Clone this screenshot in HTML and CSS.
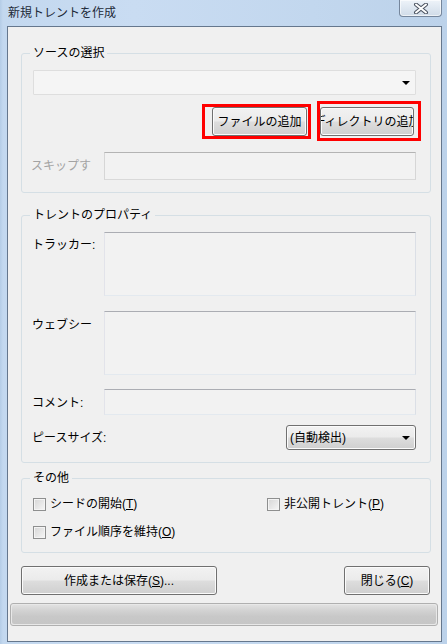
FILE: index.html
```html
<!DOCTYPE html>
<html lang="ja">
<head>
<meta charset="utf-8">
<title>新規トレントを作成</title>
<link rel="stylesheet" href="styles.css">
</head>
<body>
<div class="window">
  <div class="titlebar">
    <span class="title">新規トレントを作成</span>
    <div class="close">
      <svg width="16" height="11" viewBox="0 0 16 11">
        <path d="M3 1.5 L13 9.5 M13 1.5 L3 9.5" stroke="#4a5260" stroke-width="4" stroke-linecap="round" fill="none"/>
        <path d="M3 1.5 L13 9.5 M13 1.5 L3 9.5" stroke="#ffffff" stroke-width="2" stroke-linecap="round" fill="none"/>
      </svg>
    </div>
  </div>
  <div class="client">
    <section class="group g1">
      <div class="gtitle">ソースの選択</div>
      <div class="combo"><span class="arrow"></span></div>
      <div class="btnrow">
        <div class="hl hl1"><div class="btn b-src"><span>ファイルの追加</span></div></div>
        <div class="hl hl2"><div class="btn b-src b-dir"><span>ディレクトリの追加</span></div></div>
      </div>
      <div class="row r-skip">
        <span class="lbl lbl-dis">スキップす</span>
        <div class="field f-skip"></div>
      </div>
    </section>

    <section class="group g2">
      <div class="gtitle">トレントのプロパティ</div>
      <div class="row r-top r-tracker">
        <span class="lbl lbl-tracker">トラッカー:</span>
        <div class="field f-area"></div>
      </div>
      <div class="row r-top r-web">
        <span class="lbl lbl-web">ウェブシー</span>
        <div class="field f-area"></div>
      </div>
      <div class="row r-comment">
        <span class="lbl">コメント:</span>
        <div class="field f-comment"></div>
      </div>
      <div class="row r-piece">
        <span class="lbl">ピースサイズ:</span>
        <div class="select"><span>(自動検出)</span><span class="arrow"></span></div>
      </div>
    </section>

    <section class="group g3">
      <div class="gtitle">その他</div>
      <div class="checks">
        <label class="chk"><span class="box"></span><span>シードの開始(<u>T</u>)</span></label>
        <label class="chk"><span class="box"></span><span>非公開トレント(<u>P</u>)</span></label>
        <label class="chk"><span class="box"></span><span>ファイル順序を維持(<u>O</u>)</span></label>
      </div>
    </section>

    <div class="actions">
      <div class="btn b-save"><span>作成または保存(<u>S</u>)...</span></div>
      <div class="btn b-close"><span>閉じる(<u>C</u>)</span></div>
    </div>

    <div class="progress"><div class="track"></div></div>
  </div>
</div>
</body>
</html>
```

FILE: styles.css
```css
* { box-sizing: border-box; }

body {
  margin: 0;
  font-family: "Liberation Sans", "Noto Sans CJK JP", sans-serif;
  font-size: 12px;
  color: #000;
}

.window {
  width: 447px;
  height: 644px;
  background: linear-gradient(to right, #b4cce6 0px, #c3d8ef 3px, #c9dcf2 30%, #c2d7ee 70%, #bcd2ea 100%);
  display: flex;
  flex-direction: column;
  overflow: hidden;
}

.titlebar {
  height: 26px;
  flex: none;
  display: flex;
  justify-content: space-between;
  align-items: flex-start;
}

.title {
  margin: 5px 0 0 8px;
  line-height: 16px;
  color: #1e2a38;
}

.close {
  width: 43px;
  height: 17px;
  margin-right: 5px;
  border: 1px solid #75869c;
  border-top: none;
  border-radius: 0 0 4px 4px;
  background: linear-gradient(#eef3f9, #dde6f0 55%, #d0dbe8);
  box-shadow: inset 0 0 0 1px rgba(255,255,255,0.6);
  display: flex;
  align-items: center;
  justify-content: center;
}

.client {
  width: 435px;
  height: 616px;
  margin-left: 7px;
  flex: none;
  border: 1px solid #65778d;
  background: #f0f0f0;
  display: flex;
  flex-direction: column;
}

.group {
  margin-left: 13px;
  width: 410px;
  border: 1px solid #d5dfe5;
  border-radius: 3px;
  padding: 0 14px 12px 11px;
  display: flex;
  flex-direction: column;
}

.gtitle {
  margin: -9px 0 0 -3px;
  padding: 0 3px;
  line-height: 16px;
  height: 16px;
  background: #f0f0f0;
  width: fit-content;
}

.g1 { margin-top: 26px; }
.g2 { margin-top: 22px; }
.g3 { margin-top: 15px; padding-bottom: 10px; }

.combo {
  margin-top: 9px;
  height: 25px;
  border: 1px solid #dedede;
  background: #f5f5f5;
  border-radius: 1px;
  display: flex;
  align-items: center;
  justify-content: flex-end;
  padding-right: 5px;
}

.arrow {
  width: 0;
  height: 0;
  border-left: 4px solid transparent;
  border-right: 4px solid transparent;
  border-top: 4px solid #000;
}

.btnrow {
  margin-top: 12px;
  height: 29px;
  display: flex;
  justify-content: flex-end;
  gap: 13px;
  padding-right: 2px;
}

.btn {
  border: 1px solid #707070;
  border-radius: 3px;
  background: linear-gradient(#f2f2f2 0%, #ebebeb 48%, #dddddd 52%, #cfcfcf 100%);
  box-shadow: inset 0 0 0 1px #fbfbfb;
  display: flex;
  align-items: center;
  justify-content: center;
  white-space: nowrap;
  overflow: hidden;
  line-height: 16px;
}

.b-src { height: 29px; width: 95px; }
.b-dir { width: 94px; }

.hl { position: relative; }
.hl::after {
  content: "";
  position: absolute;
  border: 3px solid #ff0000;
  pointer-events: none;
}
.hl1::after { left: -10px; top: -3px; right: -4px; bottom: -3px; }
.hl2::after { left: -3px; top: -6px; right: -7px; bottom: -5px; }

.row {
  display: flex;
  align-items: center;
}

.r-top { align-items: flex-start; }

.lbl {
  line-height: 16px;
  white-space: nowrap;
}

.lbl-dis { color: #a3a3a3; margin-left: -2px; }
.lbl-tracker { margin-left: -1px; padding-top: 5px; }
.lbl-web { margin-left: -1px; padding-top: 6px; }
.r-comment .lbl, .r-piece .lbl { margin-left: -1px; }
.r-comment .lbl { padding-top: 2px; }

.field {
  margin-left: auto;
  width: 312px;
  border: 1px solid;
  border-color: #abadb3 #dbdfe6 #e3e9ef #e2e3ea;
  background: #f2f2f2;
}

.r-skip { margin-top: 16px; }
.f-skip { height: 28px; border-color: #b4b4b4 #d6d6d6 #d9d9d9 #d6d6d6; }

.r-tracker { margin-top: 9px; }
.r-web { margin-top: 15px; }
.f-area { height: 64px; }
.r-comment { margin-top: 14px; }
.f-comment { height: 26px; }
.r-piece { margin-top: 10px; }

.select {
  margin-left: auto;
  width: 130px;
  height: 25px;
  border: 1px solid #707070;
  border-radius: 3px;
  background: linear-gradient(#f2f2f2 0%, #ebebeb 48%, #dddddd 52%, #cfcfcf 100%);
  box-shadow: inset 0 0 0 1px #fbfbfb;
  display: flex;
  align-items: center;
  justify-content: space-between;
  padding: 0 5px 0 3px;
  line-height: 16px;
}

.checks {
  margin-top: 8px;
  display: grid;
  grid-template-columns: 234px auto;
  row-gap: 8px;
}

.chk {
  height: 20px;
  display: flex;
  align-items: center;
  gap: 4px;
  line-height: 16px;
  white-space: nowrap;
}

.box {
  width: 13px;
  height: 13px;
  flex: none;
  border: 1px solid #8e8f8f;
  background: linear-gradient(135deg, #d6d6d6, #f6f6f6);
  box-shadow: inset 0 0 0 1px #f4f4f4;
}

.actions {
  margin-top: 13px;
  display: flex;
  justify-content: space-between;
  padding: 0 11px 0 13px;
}

.b-save { width: 196px; height: 29px; }
.b-close { width: 86px; height: 29px; }

.progress {
  margin: 8px 0 0 2px;
  width: 428px;
  height: 23px;
  border: 1px solid #b0b0b0;
  border-radius: 3px;
  background: #e8e8e8;
  padding: 1px;
}

.track {
  height: 100%;
  border-radius: 2px;
  background: linear-gradient(#e0e0e0 0%, #d2d2d2 30%, #c8c8c8 60%, #c6c6c6 100%);
}
```
